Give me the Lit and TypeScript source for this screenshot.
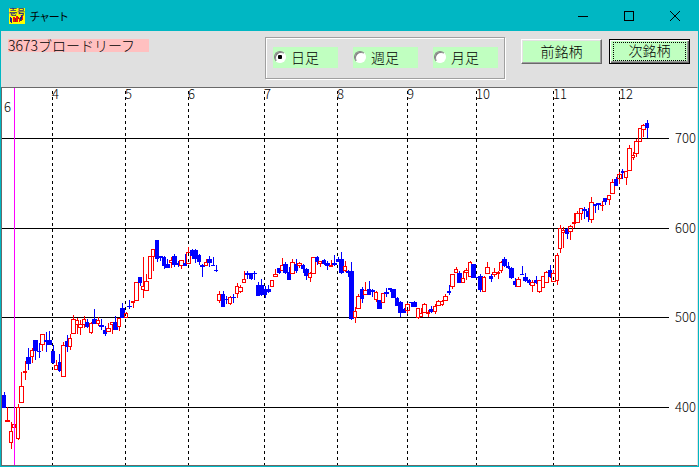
import { LitElement, html, svg, css } from "lit";
import { customElement, state } from "lit/decorators.js";

// left, right, high, body top, body bottom, low, rising (1) or falling (0)
type Candle = [number, number, number, number, number, number, number];

const CANDLES: Candle[] = [
  [2,6,392,395,408,408,0],[5,10,407,420,422,422,1],[9,13,422,431,443,449,1],[12,16,424,424,428,428,1],
  [16,20,404,407,439,440,1],[19,24,372,386,403,403,1],[23,27,361,371,373,380,1],[26,31,348,357,364,370,0],
  [30,34,348,350,357,363,1],[33,38,340,340,351,360,0],[37,41,343,351,352,358,0],[40,45,334,334,345,351,1],
  [44,49,332,340,342,352,0],[47,52,331,340,345,345,0],[51,55,345,351,363,364,0],[54,58,360,365,370,370,1],
  [58,61,354,362,371,372,0],[61,66,342,345,377,377,1],[65,69,335,341,347,352,0],[68,72,334,338,347,350,1],
  [71,76,315,319,334,334,1],[75,79,318,320,325,334,1],[78,83,320,324,328,335,1],[82,86,316,319,325,328,1],
  [85,89,319,322,327,328,0],[89,93,322,323,333,334,1],[92,97,309,319,324,324,0],[96,100,317,320,324,326,1],
  [99,104,319,325,327,330,0],[103,107,326,330,334,336,0],[106,111,323,328,332,332,1],[110,114,322,322,325,334,1],
  [113,118,316,322,330,330,0],[117,121,318,318,327,331,1],[120,125,303,308,318,318,0],[124,128,312,313,318,318,1],
  [127,132,300,306,307,309,0],[131,135,301,301,303,308,1],[134,139,282,282,301,301,1],[138,142,277,277,283,286,0],
  [141,145,257,286,290,298,1],[144,149,274,281,291,291,1],[148,152,256,256,279,279,1],[151,155,249,249,257,271,1],
  [155,159,240,240,259,262,0],[158,163,256,256,258,261,0],[162,166,256,257,266,269,0],[165,170,259,264,268,268,0],
  [169,173,257,260,263,268,1],[172,177,254,256,265,267,0],[176,180,261,263,265,267,0],[179,184,260,260,266,269,1],
  [183,187,254,263,266,266,0],[186,191,247,252,264,264,1],[190,194,249,250,256,259,0],[193,198,249,250,259,263,0],
  [197,201,254,255,262,265,0],[200,205,264,265,267,277,0],[204,208,259,262,266,266,1],[207,212,256,259,263,267,0],
  [211,215,257,265,266,266,0],[214,218,265,270,271,272,0],[217,221,291,294,301,303,1],[221,225,291,294,307,307,0],
  [224,228,296,299,300,304,0],[228,232,296,297,304,305,1],[231,236,294,297,298,303,0],[235,239,283,286,294,298,1],
  [238,243,285,287,292,293,1],[242,246,271,279,283,283,1],[245,250,271,273,275,279,0],[249,253,273,273,279,280,0],
  [252,257,271,273,274,280,0],[256,260,282,285,296,296,0],[259,264,279,285,295,296,0],[263,267,286,289,295,298,0],
  [266,271,285,289,292,293,0],[270,274,280,280,287,287,1],[273,278,269,274,277,277,1],[277,281,268,268,273,274,0],
  [280,285,258,265,271,271,1],[283,288,262,264,273,274,0],[287,291,267,272,280,280,0],[290,295,259,262,274,274,1],
  [294,298,259,264,271,273,0],[297,302,262,263,266,268,1],[301,305,264,265,269,273,0],[304,309,268,269,276,280,0],
  [308,312,272,273,278,282,1],[311,316,257,257,274,274,1],[315,319,256,257,262,265,0],[318,322,261,261,264,267,1],
  [322,326,259,260,264,265,0],[325,330,261,263,266,270,0],[329,333,260,265,267,267,1],[332,337,255,263,265,266,0],
  [336,340,257,259,262,262,0],[339,344,252,259,273,274,0],[343,347,261,266,271,272,1],[346,351,270,271,273,277,0],
  [349,354,262,271,319,320,0],[353,357,307,311,318,323,1],[356,361,294,296,309,309,1],[360,364,287,289,299,303,0],
  [363,368,282,290,295,295,1],[367,371,281,289,295,295,0],[370,375,289,290,292,297,0],[374,378,291,292,300,302,1],
  [377,382,300,300,309,309,0],[381,385,293,293,303,303,1],[384,389,288,292,294,297,0],[388,392,288,288,290,292,0],
  [391,396,289,289,298,298,0],[395,399,297,298,306,306,0],[398,403,301,302,313,317,0],[402,406,308,309,313,313,0],
  [405,410,303,304,311,314,1],[409,413,302,302,303,307,0],[412,417,301,302,307,307,0],[416,420,308,308,318,319,1],
  [419,423,308,313,317,317,1],[422,427,303,304,313,313,1],[426,430,310,312,314,317,1],[429,433,306,309,312,313,0],
  [433,437,304,306,312,314,1],[436,441,300,301,306,306,1],[440,444,300,301,305,306,1],[443,448,294,296,301,301,1],
  [447,451,285,291,293,295,0],[450,455,274,274,287,289,1],[454,458,267,269,273,273,1],[457,462,271,273,283,283,0],
  [461,465,271,278,283,283,1],[464,469,268,270,273,280,1],[468,472,261,262,277,277,1],[471,476,264,264,278,278,0],
  [475,479,277,277,278,278,0],[478,483,274,276,290,292,0],[482,486,276,277,292,292,1],[485,490,262,267,274,274,1],
  [489,493,274,276,279,282,0],[492,497,268,272,275,277,1],[496,500,271,272,274,279,1],[499,503,261,262,271,273,1],
  [502,507,257,259,266,267,0],[506,510,262,266,268,269,0],[509,514,267,268,278,279,0],[513,517,278,281,285,287,0],
  [516,521,277,279,287,287,1],[520,524,266,274,275,275,0],[523,528,273,277,281,282,0],[527,531,279,280,283,285,0],
  [530,535,280,282,286,292,1],[534,538,276,280,283,284,0],[537,542,280,280,292,293,1],[541,545,276,276,288,288,1],
  [544,549,271,272,283,283,1],[548,552,265,270,277,278,0],[551,556,270,273,282,282,1],[555,559,253,255,281,285,1],
  [558,562,225,228,249,253,1],[561,565,227,230,233,248,1],[565,569,228,229,234,239,0],[568,573,225,226,232,240,1],
  [572,576,213,222,224,228,1],[575,580,211,213,223,223,1],[579,583,208,208,214,220,1],[582,587,207,209,211,219,0],
  [586,590,208,211,217,222,0],[589,594,197,202,220,223,1],[593,597,204,204,206,213,0],[596,601,203,203,205,210,0],
  [600,604,201,205,206,211,1],[603,607,198,198,202,205,0],[607,611,195,195,200,205,1],[610,615,179,182,194,194,1],
  [614,618,177,179,186,186,0],[617,622,172,174,179,184,1],[621,624,169,171,173,179,0],[624,628,171,171,178,185,1],
  [627,632,145,148,171,171,1],[631,635,152,155,158,160,1],[634,639,139,141,154,157,1],[638,642,128,128,142,142,1],
  [641,646,124,125,130,137,1],[645,649,120,123,128,138,0],
];

const MONTHS: [number, string][] = [
  [52, "4"], [125, "5"], [188, "6"], [264, "7"], [337, "8"], [407, "9"], [476, "10"], [553, "11"], [619, "12"],
];
const PRICES: [number, string][] = [[138, "700"], [228, "600"], [317, "500"], [407, "400"]];

@customElement("price-chart")
export class PriceChart extends LitElement {
  static styles = css`
    :host { display: block; background: #fff; }
    .chart { display: block; width: 100%; height: auto; overflow: visible; }
    .label { font: 300 13px "Noto Sans CJK JP", sans-serif; fill: #000; }
    .up { fill: #f00; }
    .down { fill: #00f; }
    .grid { fill: #000; }
    .month { stroke: #000; stroke-width: 1; stroke-dasharray: 3 3; }
    .cursor { fill: #f0f; }
  `;

  private candle([l, r, high, top, bottom, low, up]: Candle) {
    const c = Math.floor((l + r) / 2);
    const wick = `M${c} ${high}h1V${top}h-1zM${c} ${bottom}h1V${low}h-1z`;
    const body = `M${l} ${top}H${r}V${bottom}H${l}z`;
    const hollow = up && bottom - top > 2 ? `M${l + 1} ${top + 1}H${r - 1}V${bottom - 1}H${l + 1}z` : "";
    return svg`<path class=${up ? "up" : "down"} fill-rule="evenodd" d=${wick + body + hollow}></path>`;
  }

  render() {
    return html`<svg class="chart" viewBox="2 88 695 377" role="img" aria-label="3673ブロードリーフ 日足">
      <g shape-rendering="crispEdges">
        ${PRICES.map(([y]) => svg`<rect class="grid" x="2" y=${y} width="667" height="1"></rect>`)}
        ${MONTHS.map(([x]) => svg`<line class="month" x1=${x + 0.5} x2=${x + 0.5} y1="91" y2="465"></line>`)}
        ${CANDLES.map((c) => this.candle(c))}
        <rect class="cursor" x="14" y="88" width="1" height="377"></rect>
      </g>
      <text class="label" x="4" y="112">6</text>
      ${MONTHS.map(([x, t]) => svg`<text class="label" x=${x} y="99">${t}</text>`)}
      ${PRICES.map(([y, t]) => svg`<text class="label" x="675" y=${y + 5}>${t}</text>`)}
    </svg>`;
  }
}

@customElement("app-root")
export class AppRoot extends LitElement {
  @state() private period = "日足";

  static styles = css`
    :host { display: block; font: 300 14px/14px "Noto Sans CJK JP", sans-serif; color: #000; }
    * { box-sizing: border-box; }
    .window { border: 1px solid #00b7c3; background: #e0e0e0; }
    .titlebar { display: flex; align-items: center; height: 30px; padding-left: 8px; background: #00b7c3; }
    .icon { display: block; margin-right: 5px; overflow: visible; }
    .icon-text { font: 700 8px "Noto Sans CJK JP", sans-serif; fill: #30307a; }
    .title { flex: 1; margin: 0; font-size: 11px; font-weight: 400; line-height: 16px; font-feature-settings: "palt"; }
    .caption { display: flex; align-items: center; justify-content: center; width: 46px; height: 28px;
      padding: 0; border: 0; background: none; }
    .caption svg { fill: none; stroke: #000; }
    .toolbar { display: flex; align-items: flex-start; height: 56px; padding: 6px 8px 0 7px; }
    .name { width: 141px; height: 13px; margin-top: 2px; line-height: 13px; background: #ffc0c0; white-space: nowrap; }
    .periods { display: flex; gap: 15px; height: 42px; margin: 0 16px 0 auto; padding: 9px 6px 0 7px;
      border: 1px solid #a0a0a0; box-shadow: inset 1px 1px #fff, 1px 1px #fff; }
    .period { display: flex; align-items: center; gap: 5px; width: 65px; height: 21px; padding: 0 0 2px 1px;
      line-height: 16px; background: #c0ffc0; }
    .radio { appearance: none; flex: none; display: grid; place-items: center; width: 12px; height: 12px; margin: 0;
      border: 1px solid; border-color: #808080 #fff #fff #808080; border-radius: 50%; background: #fff;
      box-shadow: inset 1px 1px #808080; }
    .radio:checked::before { content: ""; width: 4px; height: 4px; border-radius: 1px; background: #000; }
    .nav { display: flex; gap: 7px; margin-top: 2px; }
    .button { width: 81px; height: 25px; padding: 0 0 2px; background: #c0ffc0; font: inherit; color: #000;
      border: 1px solid; border-color: #fff #696969 #696969 #fff; box-shadow: inset -1px -1px #a0a0a0, inset 1px 1px #e3e3e3; }
    .current { padding: 2px; border-color: #000;
      box-shadow: inset 1px 1px #fff, inset -1px -1px #696969, inset -2px -2px #a0a0a0; }
    .focus { display: block; height: 100%; border: 1px dotted #000; margin: 0 1px; line-height: 15px; }
    .frame { border: 1px solid #696969; border-right-color: #e3e3e3; }
  `;

  render() {
    return html`<div class="window">
      <header class="titlebar">
        <svg class="icon" width="16" height="16" viewBox="0 0 16 16" aria-hidden="true">
          <rect width="16" height="16" fill="#ff0"></rect>
          <text class="icon-text" x="0" y="7">壱号</text>
          <g shape-rendering="crispEdges">
            <path fill="#20208a" d="M1 9h1v5H1zM2 10h1v5H2zM11 9h1v4h-1zM12 8h1v3h-1z"></path>
            <path fill="#f01010" d="M4 9h2v5H4zM7 8h2v6H7zM10 10h1v4h-1zM13 8h1v4h-1z"></path>
            <path fill="#80400a" d="M6 10h1v4H6zM9 9h1v2H9zM12 11h1v2h-1z"></path>
          </g>
        </svg>
        <h1 class="title">チャート</h1>
        <button class="caption" aria-label="最小化"><svg width="12" height="12" shape-rendering="crispEdges"><path d="M1 6.5h10"></path></svg></button>
        <button class="caption" aria-label="最大化"><svg width="12" height="12" shape-rendering="crispEdges"><path d="M1.5 1.5h9v9h-9z"></path></svg></button>
        <button class="caption" aria-label="閉じる"><svg width="12" height="12"><path d="M1 1l10 10M11 1L1 11"></path></svg></button>
      </header>
      <div class="toolbar">
        <div class="name">3673ブロードリーフ</div>
        <div class="periods" role="radiogroup" aria-label="足">
          ${["日足", "週足", "月足"].map(
            (p) => html`<label class="period"><input class="radio" type="radio" name="period" .checked=${this.period === p}
              @change=${() => (this.period = p)} />${p}</label>`
          )}
        </div>
        <div class="nav">
          <button class="button">前銘柄</button>
          <button class="button current"><span class="focus">次銘柄</span></button>
        </div>
      </div>
      <div class="frame"><price-chart></price-chart></div>
    </div>`;
  }
}
